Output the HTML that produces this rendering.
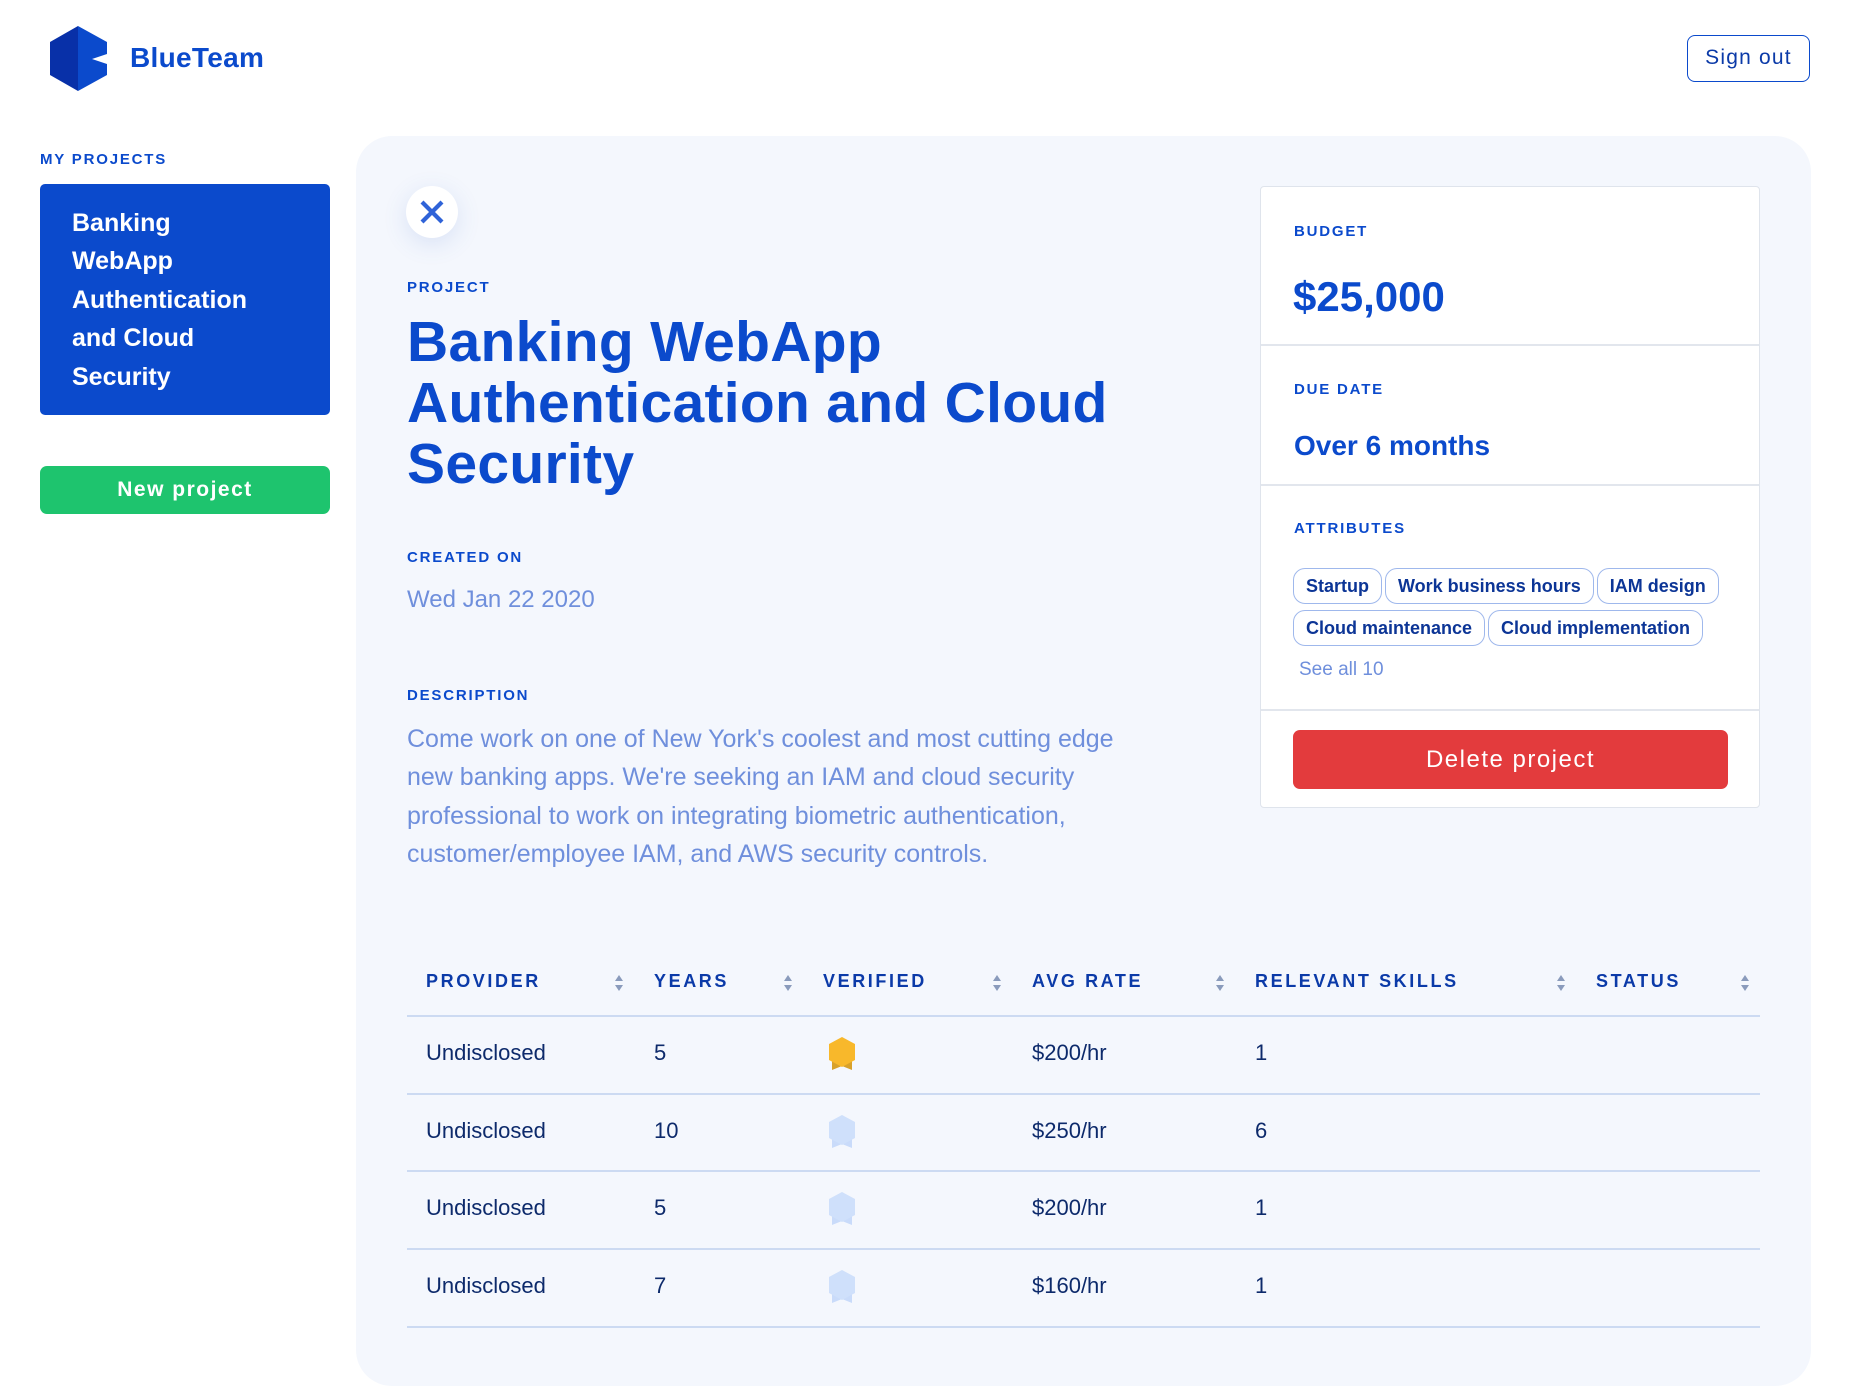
<!DOCTYPE html>
<html><head><meta charset="utf-8"><style>
*{box-sizing:border-box;margin:0;padding:0}
body{width:1860px;height:1318px;overflow:hidden;background:#fff;font-family:"Liberation Sans",sans-serif;position:relative;color:#0b3aa8}
.abs{position:absolute}
.lbl{font-weight:bold;font-size:15px;letter-spacing:1.8px;color:#0b4acc}
.panel{left:356px;top:136px;width:1455px;height:1250px;background:#f4f7fd;border-radius:36px}
.card{left:1260px;top:186px;width:500px;height:622px;background:#fff;border:1px solid #dfe4ec;border-radius:4px}
.tag{display:inline-block;height:36px;line-height:34px;border:1.5px solid #9fb8ec;border-radius:12px;padding:0 12px;font-size:18px;font-weight:bold;color:#0c3596;margin-right:3px}
.th{top:971px;font-size:18px;font-weight:bold;letter-spacing:2.6px;color:#0b3aa8}
.sort{width:10px;height:18px}
.td{font-size:22px;color:#0d2a6b}
.hl{left:407px;width:1353px;height:1.5px;background:#ccdaf2}
</style></head><body>
<svg class="abs" style="left:50px;top:26px" width="60" height="66" viewBox="0 0 60 66"><polygon points="28,0 0,16 0,49 28,65" fill="#0830a8"/><polygon points="28,0 57,16 57,28 42,33 57,38 57,49 28,65" fill="#0b4acc"/></svg>
<div class="abs" style="left:130px;top:42px;font-size:28px;font-weight:bold;color:#0b4acc;letter-spacing:0.3px">BlueTeam</div>
<div class="abs" style="left:1687px;top:35px;width:123px;height:47px;border:1.5px solid #0b4acc;border-radius:8px;text-align:center;line-height:44px;font-size:21px;color:#0b3aa8;letter-spacing:1.2px">Sign out</div>
<div class="abs lbl" style="left:40px;top:151px">MY PROJECTS</div>
<div class="abs" style="left:40px;top:184px;width:290px;height:231px;background:#0b4acc;border-radius:5px;padding:20px 32px;color:#fff;font-weight:bold;font-size:25px;line-height:38.4px">Banking<br>WebApp<br>Authentication<br>and Cloud<br>Security</div>
<div class="abs" style="left:40px;top:466px;width:290px;height:48px;background:#1ec46e;border-radius:7px;color:#fff;text-align:center;line-height:48px;font-size:21px;letter-spacing:1.5px;font-weight:bold">New project</div>
<div class="abs panel"></div>
<div class="abs" style="left:406px;top:186px;width:52px;height:52px;border-radius:50%;background:#fff;box-shadow:0 6px 24px rgba(70,110,200,0.15)"></div>
<svg class="abs" style="left:419px;top:199px" width="26" height="26" viewBox="0 0 26 26"><path d="M3 3L23 23M23 3L3 23" stroke="#2f63d8" stroke-width="4.2"/></svg>
<div class="abs lbl" style="left:407px;top:279px">PROJECT</div>
<div class="abs" style="left:407px;top:312px;font-size:57px;font-weight:bold;line-height:61px;color:#0b4acc;letter-spacing:0.3px">Banking WebApp<br>Authentication and Cloud<br>Security</div>
<div class="abs lbl" style="left:407px;top:549px">CREATED ON</div>
<div class="abs" style="left:407px;top:586px;font-size:24px;color:#6f8fdc">Wed Jan 22 2020</div>
<div class="abs lbl" style="left:407px;top:687px">DESCRIPTION</div>
<div class="abs" style="left:407px;top:720px;font-size:25px;line-height:38.4px;color:#6f8fdc;width:760px">Come work on one of New York's coolest and most cutting edge<br>new banking apps. We're seeking an IAM and cloud security<br>professional to work on integrating biometric authentication,<br>customer/employee IAM, and AWS security controls.</div>
<div class="abs card">
 <div class="abs lbl" style="left:33px;top:36px">BUDGET</div>
 <div class="abs" style="left:32px;top:86px;font-size:42px;font-weight:bold;color:#0b4acc">$25,000</div>
 <div class="abs" style="left:0;top:157px;width:498px;height:1.5px;background:#e2e6ed"></div>
 <div class="abs lbl" style="left:33px;top:194px">DUE DATE</div>
 <div class="abs" style="left:33px;top:243px;font-size:28px;font-weight:bold;color:#0b4acc">Over 6 months</div>
 <div class="abs" style="left:0;top:297px;width:498px;height:1.5px;background:#e2e6ed"></div>
 <div class="abs lbl" style="left:33px;top:333px">ATTRIBUTES</div>
 <div class="abs" style="left:32px;top:381px;width:460px">
  <div style="height:42px"><span class="tag">Startup</span><span class="tag">Work business hours</span><span class="tag">IAM design</span></div>
  <div><span class="tag">Cloud maintenance</span><span class="tag">Cloud implementation</span></div>
 </div>
 <div class="abs" style="left:38px;top:472px;font-size:19px;color:#6f8fdc">See all 10</div>
 <div class="abs" style="left:0;top:522px;width:498px;height:1.5px;background:#e2e6ed"></div>
 <div class="abs" style="left:32px;top:543px;width:435px;height:59px;background:#e33b3d;border-radius:7px;color:#fff;text-align:center;line-height:59px;font-size:24px;letter-spacing:1.5px">Delete project</div>
</div>
<div class="abs th" style="left:426px">PROVIDER</div>
<div class="abs th" style="left:654px">YEARS</div>
<div class="abs th" style="left:823px">VERIFIED</div>
<div class="abs th" style="left:1032px">AVG RATE</div>
<div class="abs th" style="left:1255px">RELEVANT SKILLS</div>
<div class="abs th" style="left:1596px">STATUS</div>
<svg width="0" height="0" style="position:absolute"><defs><g id="s"><path d="M5 1L9 7H1Z M5 17L9 11H1Z" fill="#8a9bbc"/></g><g id="bg"><path d="M4 22L4 34L14 30L24 34L24 22Z" fill="#d8a12a"/><path d="M14 1L27 8V24L14 31L1 24V8Z" fill="#f8b82b"/></g><g id="bl"><path d="M4 22L4 34L14 30L24 34L24 22Z" fill="#c9dbfa"/><path d="M14 1L27 8V24L14 31L1 24V8Z" fill="#cfe0fb"/></g></defs></svg>
<svg class="abs sort" style="left:614px;top:974px"><use href="#s"/></svg>
<svg class="abs sort" style="left:783px;top:974px"><use href="#s"/></svg>
<svg class="abs sort" style="left:992px;top:974px"><use href="#s"/></svg>
<svg class="abs sort" style="left:1215px;top:974px"><use href="#s"/></svg>
<svg class="abs sort" style="left:1556px;top:974px"><use href="#s"/></svg>
<svg class="abs sort" style="left:1740px;top:974px"><use href="#s"/></svg>
<div class="abs hl" style="top:1015px"></div>
<div class="abs hl" style="top:1093px"></div>
<div class="abs hl" style="top:1170px"></div>
<div class="abs hl" style="top:1248px"></div>
<div class="abs hl" style="top:1326px"></div>
<div class="abs td" style="left:426px;top:1040px">Undisclosed</div><div class="abs td" style="left:654px;top:1040px">5</div><svg class="abs" style="left:828px;top:1036px" width="28" height="35"><use href="#bg"/></svg><div class="abs td" style="left:1032px;top:1040px">$200/hr</div><div class="abs td" style="left:1255px;top:1040px">1</div>
<div class="abs td" style="left:426px;top:1118px">Undisclosed</div><div class="abs td" style="left:654px;top:1118px">10</div><svg class="abs" style="left:828px;top:1114px" width="28" height="35"><use href="#bl"/></svg><div class="abs td" style="left:1032px;top:1118px">$250/hr</div><div class="abs td" style="left:1255px;top:1118px">6</div>
<div class="abs td" style="left:426px;top:1195px">Undisclosed</div><div class="abs td" style="left:654px;top:1195px">5</div><svg class="abs" style="left:828px;top:1191px" width="28" height="35"><use href="#bl"/></svg><div class="abs td" style="left:1032px;top:1195px">$200/hr</div><div class="abs td" style="left:1255px;top:1195px">1</div>
<div class="abs td" style="left:426px;top:1273px">Undisclosed</div><div class="abs td" style="left:654px;top:1273px">7</div><svg class="abs" style="left:828px;top:1269px" width="28" height="35"><use href="#bl"/></svg><div class="abs td" style="left:1032px;top:1273px">$160/hr</div><div class="abs td" style="left:1255px;top:1273px">1</div>
</body></html>
